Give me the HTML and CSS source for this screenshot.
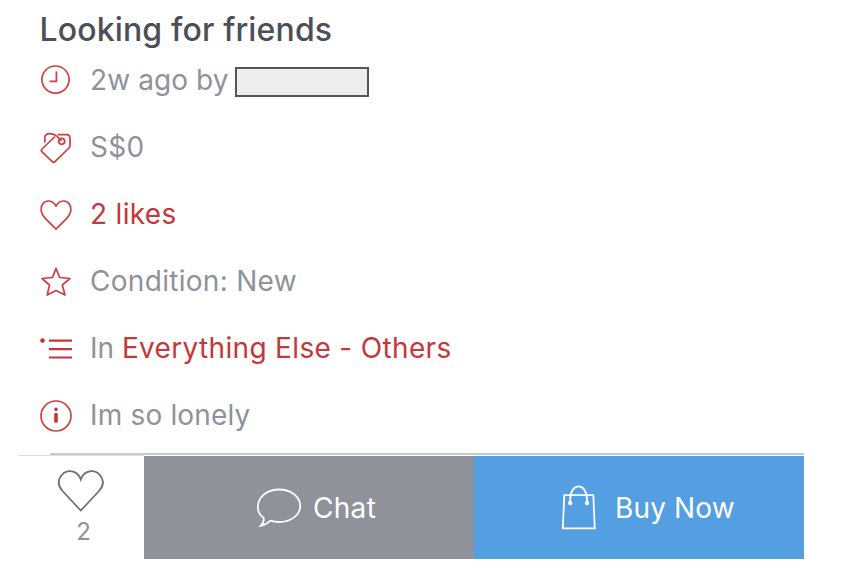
FILE: index.html
```html
<!DOCTYPE html>
<html lang="en">
<head>
<meta charset="utf-8">
<title>Looking for friends</title>
<link rel="stylesheet" href="styles.css">
</head>
<body>
<main class="listing">
  <h1 class="title"><span>Looking for friends</span></h1>
  <ul class="details">
    <li class="row"><svg class="icon" viewBox="30 46 60 67"><circle cx="55.5" cy="79.6" r="13.6"/><path d="M56.4 71.5V81.4H49.5"/></svg><span class="t-time">2w ago by</span><span class="redacted"></span></li>
    <li class="row"><svg class="icon" viewBox="30 113 60 67"><path d="M57.5 134.6H66.5Q70 134.6 70 138.2V145.5Q70 147 69 148L55 161.7Q53.7 163 52.3 161.7L42 151.8Q40.7 150.5 42 149L55 136.5"/><path d="M44.8 142.5V137.5Q45 133.6 50 133.6C54.5 133.6 57 136 61.5 141"/><circle cx="61.7" cy="141.3" r="3"/></svg><span class="t-price">S$0</span></li>
    <li class="row"><svg class="icon" viewBox="30 180 60 67"><path d="M56 206.2C52.5 199.2 45 200 42.5 204.2C39.5 209.2 41.5 214 45 218.2L56 229.2L67 218.2C70.5 214 72.5 209.2 69.5 204.2C67 200 59.5 199.2 56 206.2Z"/></svg><span class="accent t-likes">2 likes</span></li>
    <li class="row"><svg class="icon" viewBox="30 247 60 67"><path d="M56 268.4L59.7 277.5L70 278.5L62.3 285L65 295L56 290.4L47.2 295L49.5 285L42 278.5L52.5 277.5Z"/></svg><span class="t-cond">Condition: New</span></li>
    <li class="row"><svg class="icon" viewBox="30 314 60 67"><circle class="solid" cx="42.5" cy="340.6" r="2.3"/><path class="bars" d="M49 340.7H72M49 349.1H72M49 357.5H72"/></svg><span class="t-cat">In <span class="accent">Everything Else - Others</span></span></li>
    <li class="row"><svg class="icon" viewBox="30 381 60 67"><circle cx="56" cy="416" r="15"/><circle class="solid" cx="56" cy="409.3" r="1.8"/><path class="stem" d="M56 414.6V421.3"/></svg><span class="t-desc">Im so lonely</span></li>
  </ul>
  <div class="rule"></div>
  <footer class="actions">
    <div class="likes">
      <svg class="heart" viewBox="18 456 126 60"><path d="M80.8 479.5C77.5 469.5 67 469.2 62.2 474.5C56.8 480.5 58.6 486.5 62.5 491L80.8 510.5L99 491C103 486.5 104.8 480.5 99.4 474.5C94.6 469.2 84 469.5 80.8 479.5Z"/></svg>
      <span class="count">2</span>
    </div>
    <div class="button chat">
      <svg class="bubble" viewBox="255 484.5 48 46"><path d="M260.7 525.4Q264.8 521 263.5 517.3C258 513.5 257.8 507.8 257.9 505.5C258.3 496 267.5 489 279 489C291 489 300.2 496.3 300.2 505.3C300.2 514.5 291 521.5 279 521.5Q274.5 521.5 270.5 520.2Q266 524.5 260.7 525.4Z"/></svg>
      <span class="t-chat">Chat</span>
    </div>
    <div class="button buy">
      <svg class="bag" viewBox="558 483 42 50"><path d="M564.3 495.2H593.3L594.8 528.4H562.8ZM570.2 503V499.5C570.2 482 587 482 587 499.5V503"/><circle cx="570.2" cy="503" r="1.3"/><circle cx="587" cy="503" r="1.3"/></svg>
      <span class="t-buy">Buy Now</span>
    </div>
  </footer>
</main>
</body>
</html>
```
FILE: styles.css
```css
* { box-sizing: border-box; }
body {
  margin: 0;
  background: #fff;
  font-family: Inter, "Liberation Sans", sans-serif;
}
svg { display: block; fill: none; flex: none; }
.listing { width: 854px; height: 584px; overflow: hidden; }
.title {
  height: 46px;
  margin: 0;
  padding: 10px 0 0 39.5px;
  font-size: 32px;
  line-height: 40px;
  font-weight: 500;
  letter-spacing: 0.15px;
  color: #4d4f56;
  white-space: nowrap;
}
.details { margin: 0; padding: 0 0 0 30px; list-style: none; }
.row {
  display: flex;
  align-items: center;
  height: 67px;
  font-size: 28px;
  color: #8f929b;
  white-space: nowrap;
}
.t-time { letter-spacing: 0.1px; }
.t-price, .t-likes, .t-cond { letter-spacing: 0.3px; }
.t-cat .accent { letter-spacing: 0.33px; }
.t-desc { letter-spacing: 0.17px; }
.t-chat { letter-spacing: 0.3px; }
.t-buy { letter-spacing: 0.15px; }
.icon { width: 60px; height: 67px; stroke: #cf3f43; stroke-width: 1.7; stroke-linejoin: round; }
.solid { fill: #c93438; stroke: none; }
.bars { stroke: #c93438; stroke-width: 2.2; }
.stem { stroke: #c93438; stroke-width: 3.6; stroke-linecap: round; }
.accent { color: #c4373a; }
.redacted {
  width: 134px;
  height: 30px;
  margin: 4px 0 0 6px;
  border: 2px solid #555658;
  background: #ededed;
}
.rule { height: 2px; margin: 5px 50px 0 50px; background: #c9c9cb; }
.actions { display: flex; width: 786px; height: 104px; margin-left: 18px; }
.likes {
  width: 126px;
  border-top: 1px solid #dddddf;
  text-align: center;
  color: #8f929b;
}
.heart { width: 126px; height: 60px; stroke: #707174; stroke-width: 1.8; }
.count { display: block; padding-left: 5px; font-size: 24px; line-height: 31px; }
.button {
  display: flex;
  align-items: center;
  width: 330px;
  margin-top: 1px;
  font-size: 28px;
  color: #fff;
}
.chat { padding-left: 111px; background: #8f929b; }
.buy { padding-left: 84px; background: #549ee2; }
.bubble { width: 48px; height: 46px; margin-right: 10px; stroke: #fff; stroke-width: 1.8; }
.bag { width: 42px; height: 50px; margin-right: 15px; stroke: #fff; stroke-width: 1.8; }
.bag circle { fill: #fff; }
```
